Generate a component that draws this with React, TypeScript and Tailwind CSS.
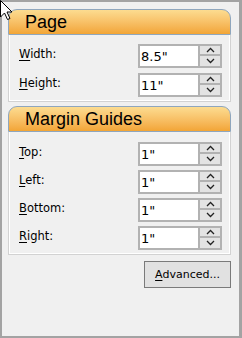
import React from 'react';

const font = { fontFamily: '"DejaVu Sans", Tahoma, sans-serif' };

function Mnemonic({ text }: { text: string }) {
  return (
    <>
      <span className="underline underline-offset-2 decoration-1">{text[0]}</span>
      {text.slice(1)}
    </>
  );
}

function Chevron({ up }: { up?: boolean }) {
  return (
    <svg width="9" height="6" viewBox="0 0 9 6" className="block">
      <path
        d={up ? 'M1 5 L4.5 1.5 L8 5' : 'M1 1 L4.5 4.5 L8 1'}
        fill="none"
        stroke="#222"
        strokeWidth="1.3"
      />
    </svg>
  );
}

function Spin({ label, value }: { label: string; value: string }) {
  return (
    <div className="flex items-center justify-between h-[24px]">
      <div className="text-[11.5px] text-black mb-[2px] leading-none">
        <Mnemonic text={label} />
      </div>
      <div className="flex h-[24px] w-[84px]">
        <div className="flex-1 bg-white border-2 border-[#b2b2b2] flex items-center pl-[1px] text-[13px] text-black leading-none">
          {value}
        </div>
        <div className="w-[22px] flex flex-col">
          <div className="h-[12px] bg-[#e3e3e3] border-2 border-l-0 border-[#b2b2b2] flex items-center justify-center">
            <Chevron up />
          </div>
          <div className="h-[12px] bg-[#e3e3e3] border-2 border-l-0 border-t-0 border-[#b2b2b2] flex items-center justify-center">
            <Chevron />
          </div>
        </div>
      </div>
    </div>
  );
}

function Panel({ title, children, body }: { title: string; children: React.ReactNode; body: string }) {
  return (
    <div>
      <div
        className="h-[26px] rounded-t-[9px] border border-[#8fa6bd] bg-gradient-to-b from-[#fcdc90] to-[#f2a535] flex items-center pl-[16px] text-[18px] text-black"
        style={{ fontFamily: '"Liberation Sans", Arial, sans-serif' }}
      >
        {title}
      </div>
      <div className={`border-x border-b border-[#d2d2d2] shadow-[inset_1px_0_0_#ffffff,inset_-1px_0_0_#ffffff,inset_0_-1px_0_#ffffff] pl-[10px] pr-[8px] flex flex-col ${body}`}>
        {children}
      </div>
    </div>
  );
}

export default function App() {
  return (
    <div
      className="relative w-[242px] h-[338px] bg-[#f0f0f0] border-t-2 border-l-2 border-r-[3px] border-b-2 border-[#a3a3a3] pt-[7px] pl-[6px] pr-[8px]"
      style={font}
    >
      <Panel title="Page" body="pt-[9px] pb-[4px] gap-[5px]">
        <Spin label="Width:" value={'8.5"'} />
        <Spin label="Height:" value={'11"'} />
      </Panel>

      <div className="mt-[4px]">
        <Panel title="Margin Guides" body="pt-[10px] pb-[4px] gap-[4px]">
          <Spin label="Top:" value={'1"'} />
          <Spin label="Left:" value={'1"'} />
          <Spin label="Bottom:" value={'1"'} />
          <Spin label="Right:" value={'1"'} />
        </Panel>
      </div>

      <div className="flex justify-end mt-[6px]">
        <button className="w-[87px] h-[27px] bg-[#e1e1e1] border border-[#7a7a7a] text-[11px] text-black leading-none">
          <Mnemonic text="Advanced..." />
        </button>
      </div>

      <svg width="13" height="21" viewBox="0 0 13 21" className="absolute -top-[2px] -left-[2px]">
        <path d="M0.5 0.5 L0.5 17 L4.5 13 L7.5 19.5 L10 18.5 L7 12 L12 12 Z" fill="#fff" stroke="#000" strokeWidth="1" />
      </svg>
    </div>
  );
}
